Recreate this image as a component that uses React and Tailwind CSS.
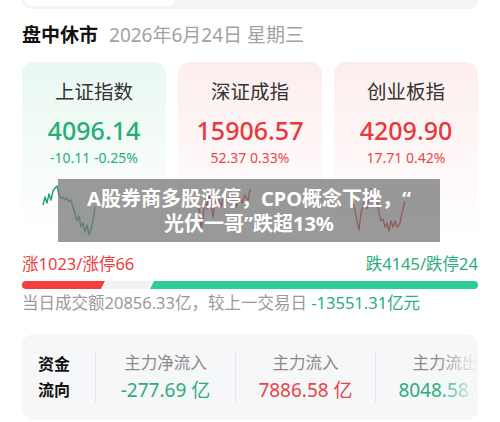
import React from 'react';

const font = { fontFamily: '"Noto Sans", "Noto Sans CJK SC", sans-serif' };

const indices = [
    {
        name: '上证指数',
        value: '4096.14',
        change: '-10.11 -0.25%',
        up: false,
        points: '21,22 23,14 25,20 27,11 29,17 31,8 33,5 35,3 37,12 39,15 41,14 43,17 45,15 47,19 49,17 51,24 53,30 55,38 57,33 59,44 61,40 63,49 65,42 67,52 69,46 71,38 73,24',
    },
    {
        name: '深证成指',
        value: '15906.57',
        change: '52.37 0.33%',
        up: true,
        points: '20,22 22,30 23,46 25,36 27,16 29,26 31,10 33,20 35,34 37,18 40,14 43,24 46,12 49,20 52,9 55,16 58,24 61,14 64,20 67,12 70,18 72,6',
    },
    {
        name: '创业板指',
        value: '4209.90',
        change: '17.71 0.42%',
        up: true,
        points: '19,20 21,28 23,38 25,47 27,30 29,22 31,16 33,26 35,12 37,6 39,14 41,22 43,18 45,30 47,38 49,36 51,44 53,40 55,48 57,38 59,44 61,38 63,44 66,40 68,30 71,18',
    },
];

const flows = [
    { label: '主力净流入', value: '-277.69 亿', up: false },
    { label: '主力流入', value: '7886.58 亿', up: true },
    { label: '主力流出', value: '8048.58 亿', up: false },
];

const IndexCard = ({ item }) => (
    <div
        className={`flex flex-col items-center w-[144px] h-[179px] rounded-xl pt-[17px] ${
            item.up ? 'bg-gradient-to-b from-[#fdeeee] to-white' : 'bg-gradient-to-b from-[#eaf8f1] to-white'
        }`}
    >
        <div className="text-[19.5px] leading-[26px] text-[#333]">{item.name}</div>
        <div className={`mt-[9px] text-[25px] leading-[32px] font-medium ${item.up ? 'text-[#e8373d]' : 'text-[#27ad78]'}`}>
            {item.value}
        </div>
        <div className={`mt-[3px] text-[14px] leading-[18px] ${item.up ? 'text-[#e8484c]' : 'text-[#2aae7c]'}`}>
            {item.change}
        </div>
        <svg className="mt-[16px]" width="144" height="56" viewBox="0 0 144 56">
            <polyline
                points={item.points}
                fill="none"
                stroke={item.up ? '#c8282c' : '#1f9d6a'}
                strokeWidth="1.4"
                strokeLinejoin="round"
            />
        </svg>
    </div>
);

const App = () => {
    return (
        <div className="w-[500px] h-[422px] bg-white overflow-hidden" style={font}>
            <div className="mx-[22px] h-[9px] bg-[#f4f4f4] rounded-b-xl pl-[3px]">
                <div className="w-[150px] h-[6px] bg-white rounded-b-lg" />
            </div>

            <div className="flex items-center gap-[11px] mt-[13px] px-[22px] h-[26px]">
                <span className="text-[19px] font-bold text-[#111]">盘中休市</span>
                <span className="text-[19px] text-[#a2a2a2]">2026年6月24日 星期三</span>
            </div>

            <div className="relative mt-[14px] px-[22px]">
                <div className="flex justify-between">
                    {indices.map((item) => (
                        <IndexCard key={item.name} item={item} />
                    ))}
                </div>
                <div className="absolute left-[58px] top-[117px] w-[382px] h-[63px] bg-[rgba(118,118,118,0.74)] flex flex-col items-center justify-center">
                    <div className="text-white font-bold text-[20px] leading-[25px]">A股券商多股涨停，CPO概念下挫，“</div>
                    <div className="text-white font-bold text-[20px] leading-[25px]">光伏一哥”跌超13%</div>
                </div>
            </div>

            <div className="flex justify-between mt-[12px] px-[22px] text-[16.5px] leading-[22px]">
                <span className="text-[#ec4040]">涨1023/涨停66</span>
                <span className="text-[#2aae7c]">跌4145/跌停24</span>
            </div>

            <div className="flex mt-[6px] mx-[22px] h-[8px]">
                <div className="w-[83px] bg-[#f43d3d] rounded-l-full [clip-path:polygon(0_0,100%_0,calc(100%-4px)_100%,0_100%)]" />
                <div className="w-[49px] -ml-[2px] bg-[#f0f2f5] [clip-path:polygon(4px_0,100%_0,calc(100%-4px)_100%,0_100%)]" />
                <div className="flex-1 -ml-[2px] bg-[#2fcb95] rounded-r-full [clip-path:polygon(4px_0,100%_0,100%_100%,0_100%)]" />
            </div>

            <div className="mt-[3px] px-[22px] text-[16.5px] leading-[22px] text-[#9a9a9a] whitespace-nowrap">
                当日成交额20856.33亿，较上一交易日 <span className="text-[#2aae7c]">-13551.31亿元</span>
            </div>

            <div className="relative mt-[20px] mx-[22px] h-[86px] bg-[#f6f7f9] rounded-xl overflow-hidden flex items-center">
                <div className="pl-[16px] w-[73px] shrink-0 text-[16px] leading-[26px] font-bold text-[#111]">
                    <div>资金</div>
                    <div>流向</div>
                </div>
                {flows.map((f) => (
                    <div key={f.label} className="shrink-0 w-[140px] flex flex-col items-center border-l border-[#e6e8eb]">
                        <div className="text-[16.5px] leading-[24px] text-[#8a8a8a]">{f.label}</div>
                        <div className={`mt-[2px] text-[19px] leading-[26px] ${f.up ? 'text-[#e84446]' : 'text-[#2aae7c]'}`}>
                            {f.value}
                        </div>
                    </div>
                ))}
                <div className="absolute right-0 top-0 h-full w-[40px] bg-gradient-to-r from-[rgba(246,247,249,0)] to-[#f6f7f9]" />
            </div>
        </div>
    );
};

export default App;
